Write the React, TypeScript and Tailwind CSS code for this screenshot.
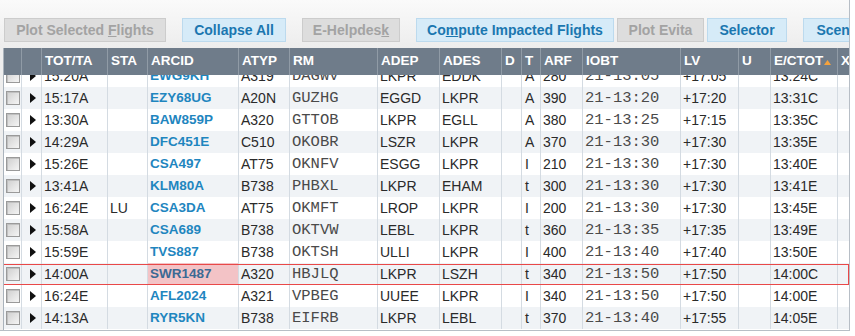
import React from "react";

type Flight = {
  tot: string;
  sta?: string;
  arcid: string;
  atyp: string;
  rm: string;
  adep: string;
  ades: string;
  t: string;
  arf: string;
  iobt: string;
  lv: string;
  ctot: string;
  sel?: boolean;
};

const flights: Flight[] = [
  { tot: "15:20A", arcid: "EWG9KH", atyp: "A319", rm: "DAGWV", adep: "LKPR", ades: "EDDK", t: "A", arf: "280", iobt: "21-13:05", lv: "+17:05", ctot: "13:24C" },
  { tot: "15:17A", arcid: "EZY68UG", atyp: "A20N", rm: "GUZHG", adep: "EGGD", ades: "LKPR", t: "A", arf: "390", iobt: "21-13:20", lv: "+17:20", ctot: "13:31C" },
  { tot: "13:30A", arcid: "BAW859P", atyp: "A320", rm: "GTTOB", adep: "LKPR", ades: "EGLL", t: "A", arf: "380", iobt: "21-13:25", lv: "+17:15", ctot: "13:35C" },
  { tot: "14:29A", arcid: "DFC451E", atyp: "C510", rm: "OKOBR", adep: "LSZR", ades: "LKPR", t: "A", arf: "370", iobt: "21-13:30", lv: "+17:30", ctot: "13:35E" },
  { tot: "15:26E", arcid: "CSA497", atyp: "AT75", rm: "OKNFV", adep: "ESGG", ades: "LKPR", t: "I", arf: "210", iobt: "21-13:30", lv: "+17:30", ctot: "13:40E" },
  { tot: "13:41A", arcid: "KLM80A", atyp: "B738", rm: "PHBXL", adep: "LKPR", ades: "EHAM", t: "t", arf: "300", iobt: "21-13:30", lv: "+17:30", ctot: "13:41E" },
  { tot: "16:24E", sta: "LU", arcid: "CSA3DA", atyp: "AT75", rm: "OKMFT", adep: "LROP", ades: "LKPR", t: "I", arf: "200", iobt: "21-13:30", lv: "+17:30", ctot: "13:45E" },
  { tot: "15:58A", arcid: "CSA689", atyp: "B738", rm: "OKTVW", adep: "LEBL", ades: "LKPR", t: "t", arf: "360", iobt: "21-13:35", lv: "+17:35", ctot: "13:49E" },
  { tot: "15:59E", arcid: "TVS887", atyp: "B738", rm: "OKTSH", adep: "ULLI", ades: "LKPR", t: "I", arf: "400", iobt: "21-13:40", lv: "+17:40", ctot: "13:50E" },
  { tot: "14:00A", arcid: "SWR1487", atyp: "A320", rm: "HBJLQ", adep: "LKPR", ades: "LSZH", t: "t", arf: "340", iobt: "21-13:50", lv: "+17:50", ctot: "14:00C", sel: true },
  { tot: "16:24E", arcid: "AFL2024", atyp: "A321", rm: "VPBEG", adep: "UUEE", ades: "LKPR", t: "I", arf: "340", iobt: "21-13:50", lv: "+17:50", ctot: "14:00E" },
  { tot: "14:13A", arcid: "RYR5KN", atyp: "B738", rm: "EIFRB", adep: "LKPR", ades: "LEBL", t: "t", arf: "370", iobt: "21-13:40", lv: "+17:55", ctot: "14:05E" },
];

const cols =
  "grid grid-cols-[18px_20px_66px_40px_91px_51px_88px_62px_62px_20px_19px_42px_98px_58px_32px_67px_1fr]";

const headers = ["", "", "TOT/TA", "STA", "ARCID", "ATYP", "RM", "ADEP", "ADES", "D", "T", "ARF", "IOBT", "LV", "U", "E/CTOT", "X"];

const Btn = ({
  w,
  blue,
  children,
}: {
  w: string;
  blue?: boolean;
  children: React.ReactNode;
}) => (
  <div
    className={`${w} h-[24px] shrink-0 flex items-center justify-center border text-[14px] font-bold whitespace-nowrap ${
      blue
        ? "bg-[#d6ebf8] border-[#bcdaee] text-[#1b77b0]"
        : "bg-[#dddddd] border-[#cccccc] text-[#a3a3a3]"
    }`}
  >
    <span>{children}</span>
  </div>
);

// body cell
const Cell = ({ children, className = "" }: { children?: React.ReactNode; className?: string }) => (
  <div className={`border-r border-[#d4dbe2] pl-[2px] whitespace-nowrap overflow-hidden ${className}`}>
    {children}
  </div>
);

const FlightRow = ({ f, i }: { f: Flight; i: number }) => {
  const mono = "font-['Liberation_Mono','Courier_New',monospace] text-[15.5px] text-[#4a4a4a]";
  return (
    <div
      className={`relative ${cols} h-[22px] leading-[22px] text-[14px] text-[#2a2a2a] ${
        i % 2 ? "bg-[#f0f3f6]" : "bg-white"
      }`}
    >
      <div className="border-r border-[#d4dbe2] flex items-center pl-[2px]">
        <div className="w-[14px] h-[14px] border border-[#9a9a9a] bg-linear-to-br from-[#cfcfcf] to-[#f5f5f5] shadow-[inset_1px_1px_0_#c0c0c0]" />
      </div>
      <div className="border-r border-[#d4dbe2] flex items-center pl-[8px]">
        <svg width="6" height="10" viewBox="0 0 6 10">
          <polygon points="0,0 6,5 0,10" fill="#111" />
        </svg>
      </div>
      <Cell>{f.tot}</Cell>
      <Cell>{f.sta}</Cell>
      <Cell
        className={`font-bold text-[13.5px] ${
          f.sel ? "bg-[#f3c3c6] text-[#3b6a94]" : "text-[#1f86bf]"
        }`}
      >
        {f.arcid}
      </Cell>
      <Cell>{f.atyp}</Cell>
      <Cell className={mono}>{f.rm}</Cell>
      <Cell>{f.adep}</Cell>
      <Cell>{f.ades}</Cell>
      <Cell />
      <Cell className="pl-[3px]">{f.t}</Cell>
      <Cell>{f.arf}</Cell>
      <Cell className={mono}>{f.iobt}</Cell>
      <Cell>{f.lv}</Cell>
      <Cell />
      <Cell>{f.ctot}</Cell>
      <div />
      {f.sel && (
        <div className="absolute top-[1px] bottom-0 left-[-4px] right-0 border border-[#e94848] pointer-events-none" />
      )}
    </div>
  );
};

export default function App() {
  return (
    <div className="w-[855px] h-[336px] bg-white overflow-hidden font-['Liberation_Sans',Arial,sans-serif]">
      <div className="w-[850px] h-[331px] border-r border-b border-[#b7bec6] overflow-hidden bg-[#eeeeee]">
        {/* toolbar */}
        <div className="h-[48px] pt-[18px] pl-[4px] flex gap-[16px] bg-linear-to-b from-[#fafafa] to-[#ededed]">
          <Btn w="w-[162px]">
            Plot Selected <u>F</u>lights
          </Btn>
          <Btn w="w-[104px]" blue>
            Collapse All
          </Btn>
          <Btn w="w-[98px]">
            E-Helpdes<u>k</u>
          </Btn>
          <div className="flex gap-[3px]">
            <Btn w="w-[198px]" blue>
              Co<u>m</u>pute Impacted Flights
            </Btn>
            <Btn w="w-[87px]">Plot Evita</Btn>
            <Btn w="w-[80px]" blue>
              Selector
            </Btn>
          </div>
          <Btn w="w-[86px]" blue>
            Scenario
          </Btn>
        </div>

        {/* table */}
        <div className="ml-[3px] border-l border-[#aab3bc] bg-white">
          <div className={`${cols} h-[27px] bg-[#6f7c8a] text-white font-bold text-[13.5px]`}>
            {headers.map((h, i) => (
              <div
                key={i}
                className={`flex items-center pl-[3px] whitespace-nowrap overflow-hidden ${
                  i < headers.length - 1 ? "border-r border-[#909ba6]" : ""
                }`}
              >
                {h}
                {h === "E/CTOT" && (
                  <svg width="7" height="5" viewBox="0 0 7 5" className="ml-[1px] mt-[1px]">
                    <polygon points="0,5 3.5,0 7,5" fill="#f5a23c" />
                  </svg>
                )}
              </div>
            ))}
          </div>
          <div className="h-[255px] overflow-hidden">
            <div className="-mt-[10px]">
              {flights.map((f, i) => (
                <FlightRow key={i} f={f} i={i} />
              ))}
            </div>
          </div>
        </div>
      </div>
    </div>
  );
}
